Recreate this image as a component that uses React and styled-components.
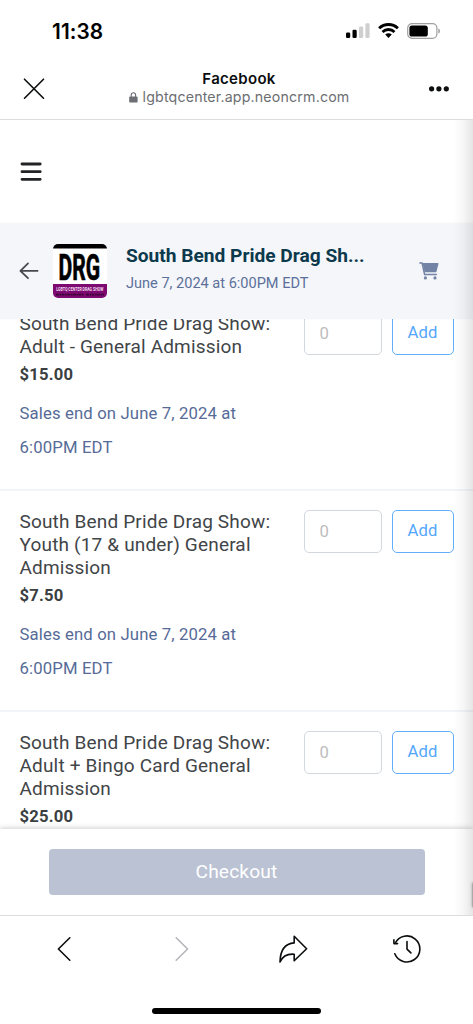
import { useState } from 'react';
import styled, { createGlobalStyle } from 'styled-components';

const GlobalStyle = createGlobalStyle`
  * {
    box-sizing: border-box;
  }
  body {
    margin: 0;
    background: #fff;
    font-family: Roboto, "Liberation Sans", sans-serif;
  }
  button {
    margin: 0;
    padding: 0;
    border: 0;
    background: none;
    font-family: inherit;
    cursor: pointer;
  }
  svg {
    display: block;
  }
`;

const Screen = styled.div`
  width: 473px;
  height: 1024px;
  display: flex;
  flex-direction: column;
  overflow: hidden;
  background: #fff;
`;

// 상태바
const StatusBar = styled.div`
  height: 62px;
  padding: 0 32px 0 52px;
  display: flex;
  align-items: center;
  justify-content: space-between;
  flex-shrink: 0;
`;

const Time = styled.div`
  font-family: Inter, sans-serif;
  font-size: 20.8px;
  font-weight: 600;
  letter-spacing: 0.1px;
  color: #000;
`;

const StatusIcons = styled.div`
  display: flex;
  align-items: center;
  gap: 8px;
`;

// 인앱 브라우저 상단
const BrowserBar = styled.div`
  height: 58px;
  padding: 0 23px 4px;
  display: flex;
  align-items: center;
  justify-content: space-between;
  flex-shrink: 0;
  border-bottom: 1px solid #dcddde;
`;

const SiteInfo = styled.div`
  display: flex;
  flex-direction: column;
  align-items: center;
  padding: 0 0 1px 5px;
  font-family: Inter, sans-serif;
`;

const SiteName = styled.div`
  font-size: 15px;
  line-height: 18px;
  font-weight: 600;
  letter-spacing: 0.3px;
  color: #0b0d0e;
`;

const SiteUrl = styled.div`
  display: flex;
  align-items: center;
  gap: 5px;
  font-size: 14.2px;
  line-height: 18px;
  letter-spacing: 0.17px;
  color: #6b6e72;
`;

const WebView = styled.div`
  position: relative;
  height: 795px;
  display: flex;
  flex-direction: column;
  flex-shrink: 0;
  overflow: hidden;
`;

// 오른쪽 가장자리 그림자
const EdgeShadow = styled.div`
  position: absolute;
  top: 0;
  right: 0;
  bottom: 0;
  width: 20px;
  z-index: 3;
  pointer-events: none;
  background: linear-gradient(to right, rgba(0, 0, 0, 0), rgba(0, 0, 0, 0.03) 50%, rgba(0, 0, 0, 0.1));
`;

const EdgeHandle = styled.div`
  position: absolute;
  right: -6px;
  bottom: 7px;
  width: 7px;
  height: 26px;
  z-index: 4;
  border-radius: 3px;
  background: #aaa;
  box-shadow: 0 0 3px rgba(0, 0, 0, 0.3);
`;

const MenuBar = styled.div`
  height: 103px;
  padding: 0 19.5px;
  display: flex;
  align-items: center;
  flex-shrink: 0;
`;

const EventHeader = styled.div`
  height: 96px;
  padding: 0 34px 0 19px;
  display: flex;
  align-items: center;
  flex-shrink: 0;
  z-index: 1;
  background: #f4f6fa;
  box-shadow: 0 0 1px rgba(60, 70, 100, 0.1);
`;

const EventLogo = styled.div`
  width: 54px;
  height: 54px;
  margin: 0 19px 0 14px;
  border-radius: 5px;
  overflow: hidden;
  background: #fff;
`;

const EventText = styled.div`
  flex: 1;
  padding-bottom: 3px;
`;

const EventTitle = styled.div`
  font-size: 19.15px;
  line-height: 28px;
  font-weight: 700;
  color: #0c394c;
  white-space: nowrap;
`;

const EventDate = styled.div`
  font-size: 14.55px;
  line-height: 28px;
  color: #5c709b;
`;

const TicketList = styled.div`
  flex: 1;
  min-height: 0;
  margin-top: -26px;
  overflow: hidden;
`;

const Ticket = styled.div`
  padding: 19px 19.5px 24px;
  display: flex;
  align-items: flex-start;
  justify-content: space-between;
  border-bottom: 2px solid #f1f4f8;
`;

const TicketInfo = styled.div`
  width: 265px;
`;

const TicketName = styled.div`
  font-size: 19px;
  line-height: 23px;
  letter-spacing: 0.17px;
  color: #414548;
`;

const Price = styled.div`
  margin-top: 1px;
  font-size: 16.6px;
  line-height: 32px;
  font-weight: 700;
  letter-spacing: 0.2px;
  color: #3b3f42;
`;

const SalesEnd = styled.div`
  width: 235px;
  margin-top: 6px;
  font-size: 16.7px;
  line-height: 34px;
  letter-spacing: 0.14px;
  color: #566b97;
`;

const Controls = styled.div`
  display: flex;
  gap: 10px;
`;

const Quantity = styled.input`
  width: 78px;
  height: 43px;
  padding: 0 15px 1px;
  border: 1.5px solid #d3d8de;
  border-radius: 5px;
  outline: 0;
  background: transparent;
  font-family: inherit;
  font-size: 16.7px;
  color: #333;

  &::placeholder {
    color: #bdbdbd;
  }
`;

const AddButton = styled.button`
  width: 62px;
  height: 43px;
  padding-bottom: 2px;
  border: 1.5px solid #62affc;
  border-radius: 5px;
  font-size: 16.7px;
  letter-spacing: 0.1px;
  color: #55a7fb;
`;

const CheckoutBar = styled.div`
  height: 86px;
  padding: 20px 48.5px 0;
  flex-shrink: 0;
  z-index: 2;
  background: #fff;
  box-shadow: 0 -1px 5px rgba(40, 40, 60, 0.22);
`;

const CheckoutButton = styled.button`
  width: 100%;
  height: 46px;
  padding-bottom: 1px;
  border-radius: 4px;
  background: #bbc2d3;
  font-size: 19.2px;
  letter-spacing: 0.15px;
  color: #fff;
`;

const BottomNav = styled.div`
  height: 66px;
  display: grid;
  grid-template-columns: 128px 108px 114px 113px;
  flex-shrink: 0;
  border-top: 1px solid #dcddde;
`;

const NavButton = styled.button`
  display: flex;
  align-items: center;
  justify-content: center;
  color: ${(props) => (props.$dim ? '#b4b6b9' : '#0b0d0e')};
`;

const HomeIndicator = styled.div`
  width: 169px;
  height: 6px;
  margin: 27px auto 0;
  border-radius: 3px;
  background: #000;
  flex-shrink: 0;
`;

const tickets = [
  {
    id: 1,
    name: 'South Bend Pride Drag Show: Adult - General Admission',
    price: '$15.00',
    salesEnd: 'June 7, 2024 at 6:00PM EDT',
  },
  {
    id: 2,
    name: 'South Bend Pride Drag Show: Youth (17 & under) General Admission',
    price: '$7.50',
    salesEnd: 'June 7, 2024 at 6:00PM EDT',
  },
  {
    id: 3,
    name: 'South Bend Pride Drag Show: Adult + Bingo Card General Admission',
    price: '$25.00',
  },
];

function SignalIcon() {
  return (
    <svg width="24" height="16" viewBox="0 0 24 16">
      <rect x="0" y="9.5" width="4.2" height="5.5" rx="1.3" fill="#000" />
      <rect x="6.5" y="6.7" width="4.2" height="8.3" rx="1.3" fill="#000" />
      <rect x="13" y="3.5" width="4.2" height="11.5" rx="1.3" fill="#cfcfcf" />
      <rect x="19.4" y="0.3" width="4.2" height="14.7" rx="1.3" fill="#cfcfcf" />
    </svg>
  );
}

function WifiIcon() {
  return (
    <svg width="21" height="16" viewBox="0 0 21 16" fill="none" stroke="#000" strokeWidth="2.8">
      <path d="M1.1 5.3C6.4.2 14.6.2 19.9 5.3" />
      <path d="M4.5 8.9c3.4-3.2 8.6-3.2 12 0" />
      <path d="M7.2 11.4c1.9-1.7 4.7-1.7 6.6 0L10.5 15z" fill="#000" stroke="none" />
    </svg>
  );
}

function BatteryIcon() {
  return (
    <svg width="34" height="16" viewBox="0 0 34 16">
      <rect x="0.7" y="0.7" width="29.2" height="14.6" rx="4.4" fill="none" stroke="#a0a0a0" strokeWidth="1.2" />
      <rect x="2.4" y="2.4" width="18.4" height="11.2" rx="2.6" fill="#000" />
      <path d="M31.3 5.4c2.2.6 2.2 4.6 0 5.2z" fill="#a0a0a0" />
    </svg>
  );
}

function DragLogo() {
  return (
    <svg width="54" height="54" viewBox="0 0 54 54">
      <rect width="54" height="4.5" fill="#000" />
      <text
        x="0"
        y="0"
        transform="translate(5.6 35.8) scale(0.65 1)"
        textLength="64"
        lengthAdjust="spacingAndGlyphs"
        fontFamily="Roboto, sans-serif"
        fontSize="36.5"
        fontWeight="700"
        fill="#000"
        stroke="#000"
        strokeWidth="0.7"
      >
        DRG
      </text>
      <rect y="40" width="54" height="14" fill="#7d0a70" />
      <text
        x="3.3"
        y="46.9"
        textLength="47"
        lengthAdjust="spacingAndGlyphs"
        fontFamily="Roboto, sans-serif"
        fontSize="5"
        fontWeight="700"
        fill="#f3dff0"
      >
        LGBTQ CENTER DRAG SHOW
      </text>
      <path d="M3 50.6h28M33 50.6h18" stroke="#3c0537" strokeWidth="1.9" strokeDasharray="3 .6 1.5 .5" />
    </svg>
  );
}

function App() {
  const [counts, setCounts] = useState({});

  // 티켓 수량 변경
  const changeCount = (id, value) => {
    setCounts({ ...counts, [id]: value });
  };

  return (
    <Screen>
      <GlobalStyle />
      <StatusBar>
        <Time>11:38</Time>
        <StatusIcons>
          <SignalIcon />
          <WifiIcon />
          <BatteryIcon />
        </StatusIcons>
      </StatusBar>

      <BrowserBar>
        <button aria-label="Close">
          <svg width="22" height="22" viewBox="0 0 22 22" fill="none" stroke="#0b0d0e" strokeWidth="1.6" strokeLinecap="round">
            <path d="M1.5 1.2l19 19M20.5 1.2l-19 19" />
          </svg>
        </button>
        <SiteInfo>
          <SiteName>Facebook</SiteName>
          <SiteUrl>
            <svg width="9" height="11" viewBox="0 0 9 11">
              <rect x="0.2" y="4.4" width="8.4" height="6.2" rx="1.2" fill="#6b6e72" />
              <path d="M2.2 5V3a2.2 2.2 0 0 1 4.4 0v2" fill="none" stroke="#6b6e72" strokeWidth="1.1" />
            </svg>
            lgbtqcenter.app.neoncrm.com
          </SiteUrl>
        </SiteInfo>
        <button aria-label="More">
          <svg width="22" height="6" viewBox="0 0 22 6" fill="#0b0d0e">
            <circle cx="3.6" cy="2.8" r="2.6" />
            <circle cx="10.9" cy="2.8" r="2.6" />
            <circle cx="18.3" cy="2.8" r="2.6" />
          </svg>
        </button>
      </BrowserBar>

      <WebView>
        <MenuBar>
          <button aria-label="Menu">
            <svg width="22" height="20" viewBox="0 0 22 20" stroke="#212325" strokeWidth="2.8" strokeLinecap="round">
              <path d="M2 2h18.2M2 9.700h18.200M2 17.300h18.200" />
            </svg>
          </button>
        </MenuBar>

        <EventHeader>
          <button aria-label="Back">
            <svg width="20" height="18" viewBox="0 0 20 18" fill="none" stroke="#46494d" strokeWidth="1.8" strokeLinecap="round" strokeLinejoin="round">
              <path d="M9 1.4L1.4 8.800 9 16.200M1.6 8.800h17" />
            </svg>
          </button>
          <EventLogo>
            <DragLogo />
          </EventLogo>
          <EventText>
            <EventTitle>South Bend Pride Drag Sh...</EventTitle>
            <EventDate>June 7, 2024 at 6:00PM EDT</EventDate>
          </EventText>
          <button aria-label="Cart">
            <svg width="20" height="18" viewBox="0 0 20 18" fill="#7283a5">
              <path d="M.9 1h2.200l2.500 11.600h11.700" fill="none" stroke="#7283a5" strokeWidth="1.5" strokeLinecap="round" />
              <path d="M3.600 1.100h15c.6 0 1 .5.8 1.100l-1.900 7.200c-.1.500-.6.900-1.100.9H5.500z" />
              <circle cx="6.400" cy="15.900" r="1.600" />
              <circle cx="16" cy="15.900" r="1.600" />
            </svg>
          </button>
        </EventHeader>

        <TicketList>
          {tickets.map((ticket) => (
            <Ticket key={ticket.id}>
              <TicketInfo>
                <TicketName>{ticket.name}</TicketName>
                <Price>{ticket.price}</Price>
                {ticket.salesEnd && <SalesEnd>Sales end on {ticket.salesEnd}</SalesEnd>}
              </TicketInfo>
              <Controls>
                <Quantity
                  placeholder="0"
                  value={counts[ticket.id] || ''}
                  onChange={(e) => changeCount(ticket.id, e.target.value)}
                />
                <AddButton>Add</AddButton>
              </Controls>
            </Ticket>
          ))}
        </TicketList>

        <CheckoutBar>
          <CheckoutButton>Checkout</CheckoutButton>
        </CheckoutBar>
        <EdgeShadow />
        <EdgeHandle />
      </WebView>

      <BottomNav>
        <NavButton aria-label="Previous">
          <svg width="14" height="26" viewBox="0 0 14 26" fill="none" stroke="currentColor" strokeWidth="1.6" strokeLinecap="round" strokeLinejoin="round">
            <path d="M12.8 1.8L1.4 13l11.4 11.2" />
          </svg>
        </NavButton>
        <NavButton aria-label="Next" $dim>
          <svg width="14" height="26" viewBox="0 0 14 26" fill="none" stroke="currentColor" strokeWidth="1.6" strokeLinecap="round" strokeLinejoin="round">
            <path d="M1.2 1.8L12.6 13 1.2 24.2" />
          </svg>
        </NavButton>
        <NavButton aria-label="Share">
          <svg width="30" height="28" viewBox="0 0 30 28" fill="none" stroke="currentColor" strokeWidth="1.6" strokeLinejoin="round">
            <path d="M16.2 1.2l12.4 12.6-12.4 12v-6.6c-6.6-.6-11.4 1.6-14.2 7.8C2.2 16.4 6.3 8.7 16.2 7.9z" />
          </svg>
        </NavButton>
        <NavButton aria-label="History">
          <svg width="30" height="30" viewBox="0 0 30 30" fill="none" stroke="currentColor" strokeWidth="1.6" strokeLinecap="round" strokeLinejoin="round">
            <path d="M3.2 9.2A13 13 0 1 1 2.8 19.8" />
            <path d="M1.9 5.900v3.700h3.700" />
            <path d="M15 7.500v7.600l3.900 3.800" />
          </svg>
        </NavButton>
      </BottomNav>
      <HomeIndicator />
    </Screen>
  );
}

export default App;
